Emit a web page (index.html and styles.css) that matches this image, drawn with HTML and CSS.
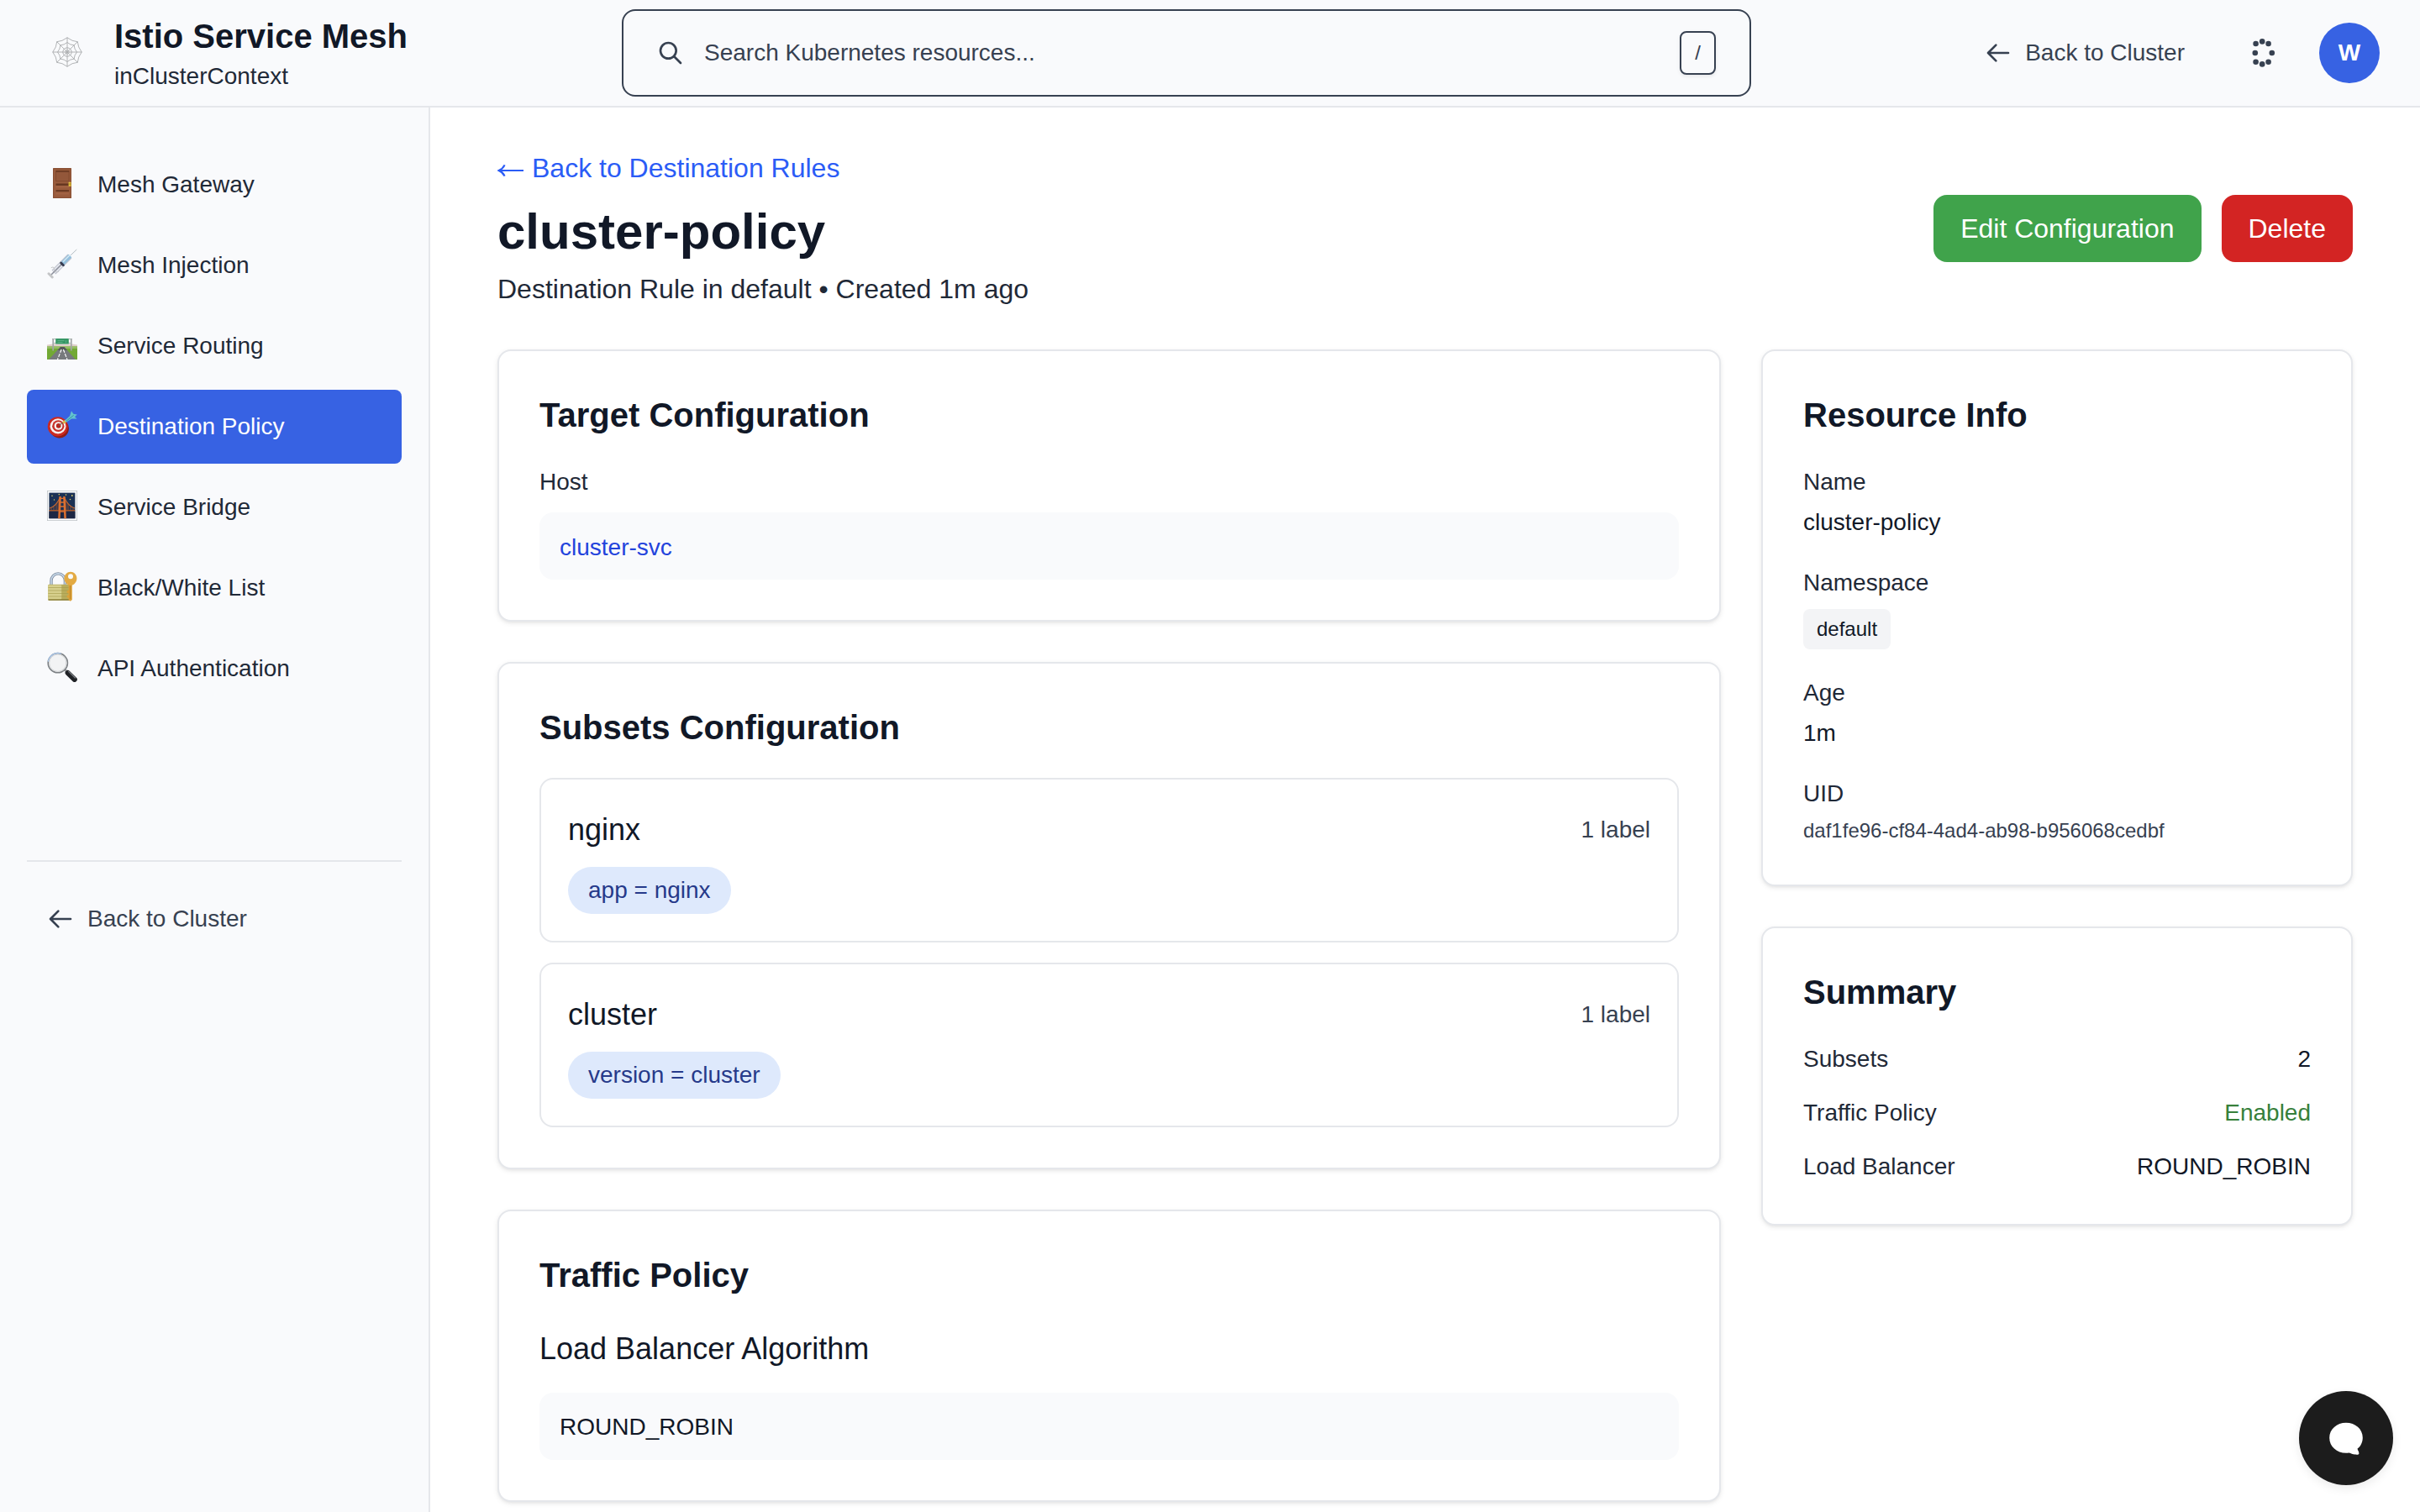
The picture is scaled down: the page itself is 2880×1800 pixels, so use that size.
FILE: index.html
```html
<!DOCTYPE html>
<html lang="en">
<head>
<meta charset="utf-8">
<title>cluster-policy - Istio Service Mesh</title>
<link rel="stylesheet" href="styles.css">
</head>
<body>
<header class="topbar">
  <div class="brand">
    <svg class="brand-icon" viewBox="0 0 36 36" fill="none" stroke="#a9abae" stroke-width="0.9">
      <path d="M18 0.5V35.5M0.5 18H35.5M5.6 5.6L30.4 30.4M30.4 5.6L5.6 30.4"/>
      <path d="M18 .8Q24 5.4 30.3 5.7Q30.6 12 35.2 18Q30.6 24 30.3 30.3Q24 30.6 18 35.2Q12 30.6 5.7 30.3Q5.4 24 .8 18Q5.4 12 5.7 5.7Q12 5.4 18 .8Z"/>
      <path d="M18 6.5Q21.6 9.6 26.1 9.9Q26.4 14.4 29.5 18Q26.4 21.6 26.1 26.1Q21.6 26.4 18 29.5Q14.4 26.4 9.9 26.1Q9.6 21.6 6.5 18Q9.6 14.4 9.9 9.9Q14.4 9.6 18 6.5Z"/>
      <circle cx="18" cy="18" r="5.2"/>
      <circle cx="18" cy="18" r="2.2"/>
    </svg>
    <div class="brand-text">
      <h1 class="brand-title">Istio Service Mesh</h1>
      <p class="brand-context">inClusterContext</p>
    </div>
  </div>
  <div class="search">
    <svg class="icon" viewBox="0 0 24 24"><path d="M21 21l-6-6m2-5a7 7 0 11-14 0 7 7 0 0114 0z"/></svg>
    <span class="search-text">Search Kubernetes resources...</span>
    <kbd class="search-key">/</kbd>
  </div>
  <div class="actions">
    <a class="header-link">
      <svg class="icon" viewBox="0 0 24 24"><path d="M10 19l-7-7m0 0l7-7m-7 7h18"/></svg>
      <span>Back to Cluster</span>
    </a>
    <svg class="dots" viewBox="0 0 40 40" fill="#374151">
      <circle cx="18.2" cy="6.4" r="3.3"/><circle cx="10.6" cy="9" r="3.3"/><circle cx="25.6" cy="9" r="3.3"/>
      <circle cx="9.8" cy="20" r="3.3"/><circle cx="29.8" cy="20" r="3.3"/>
      <circle cx="10.6" cy="30.8" r="3.3"/><circle cx="25.6" cy="30.8" r="3.3"/><circle cx="18.2" cy="33.4" r="3.3"/>
    </svg>
    <span class="avatar">W</span>
  </div>
</header>

<div class="shell">
  <aside class="sidebar">
    <nav class="nav">
      <a class="nav-item">
        <svg class="nav-icon" viewBox="0 0 36 36">
          <rect x="7" y="0" width="22" height="36" rx=".6" fill="#8a5034"/>
          <rect x="8.2" y="1.4" width="19.6" height="33.4" fill="#9a5c3d"/>
          <path d="M10.5 3.2h15.6v12.6H10.5z" fill="#93573a" stroke="#7c452b" stroke-width=".8"/>
          <path d="M10.5 3.4h15.6v1.4H10.5zM10.5 18.6h15.6v2.2H10.5zM10.5 26.2h15.6v1.8H10.5z" fill="#63351f"/>
          <path d="M10.5 22.4h15.6M10.5 30.8h15.6" stroke="#ac6c4b" stroke-width=".8"/>
          <rect x="25.6" y="16.8" width="3" height="5" fill="#e3c23c"/>
          <path d="M25.6 19h3.2" stroke="#8f7314" stroke-width=".7"/>
        </svg>
        <span>Mesh Gateway</span>
      </a>
      <a class="nav-item">
        <svg class="nav-icon" viewBox="0 0 36 36" fill="none" stroke-linecap="round">
          <path d="M28.5 7.5L35 1.3" stroke="#b3bcc2" stroke-width="1"/>
          <path d="M8 28L27 9" stroke="#b9bcc8" stroke-width="6.8" stroke-linecap="butt"/>
          <path d="M8.4 27.6L27 9" stroke="#e4e7ee" stroke-width="5.2" stroke-linecap="butt"/>
          <path d="M18 18L27.5 8.5" stroke="#93bfdc" stroke-width="5.2" stroke-linecap="butt"/>
          <path d="M19.5 15.2L27 7.7" stroke="#d4e9f4" stroke-width="1.4"/>
          <path d="M5 31L18 18" stroke="#8d909c" stroke-width="1.6"/>
          <path d="M16.6 17L19.4 19.8" stroke="#363b50" stroke-width="2.8"/>
          <path d="M5.2 22.5Q9 20.8 8.6 25T13.5 27.4" stroke="#c3c5c8" stroke-width="1"/>
          <path d="M2 29.8L6.2 34" stroke="#c4c5c7" stroke-width="3"/>
        </svg>
        <span>Mesh Injection</span>
      </a>
      <a class="nav-item">
        <svg class="nav-icon" viewBox="0 0 36 36">
          <path d="M0 18.5L7 17.5H30L36 18.5V22H0Z" fill="#dfcfca"/>
          <path d="M0 20.4H36V36H0Z" fill="#72a934"/>
          <path d="M0 20.4H36V23H0Z" fill="#94bd63"/>
          <path d="M16 21h4.5L34 36H2Z" fill="#777a7d"/>
          <path d="M16 21h4.5L24 25H12.5Z" fill="#55585b"/>
          <path d="M17.1 24L12.5 36M19.4 24L24 36" stroke="#fff" stroke-width="1.2" stroke-dasharray="4 1.5"/>
          <path d="M7.2 11V25.5M28.8 11V25.5" stroke="#a2a5a7" stroke-width="1.7"/>
          <path d="M6 11.6H30M7 16.4H29" stroke="#a9b2ae" stroke-width="1"/>
          <rect x="10.2" y="11" width="15.6" height="6.6" rx=".7" fill="#369765"/>
          <path d="M12.5 13.5h8M12.5 15.5h6M22.5 13.2v3" stroke="#72bd97" stroke-width=".6"/>
        </svg>
        <span>Service Routing</span>
      </a>
      <a class="nav-item nav-item-active">
        <svg class="nav-icon" viewBox="0 0 36 36">
          <ellipse cx="14.3" cy="21.6" rx="11.4" ry="12" transform="rotate(-35 14.3 21.6)" fill="#8f1d17"/>
          <ellipse cx="12.7" cy="19.8" rx="12" ry="11.6" fill="#cb2a22"/>
          <ellipse cx="13" cy="19.4" rx="9.4" ry="9.1" fill="#f6f1ef"/>
          <ellipse cx="13.3" cy="19.2" rx="7.1" ry="6.9" fill="#c8322a"/>
          <ellipse cx="13.5" cy="19" rx="4.9" ry="4.8" fill="#f6f1ef"/>
          <ellipse cx="13.7" cy="18.9" rx="2.8" ry="2.8" fill="#b9271f"/>
          <path d="M14 18.6L21 13.6" stroke="#6d6253" stroke-width="1.1"/>
          <path d="M19 15.6L22.4 12.8" stroke="#e0b94a" stroke-width="3"/>
          <path d="M21 12.8L27 7.2 29 1.2 31.4 4.8 35.8 5.6 33 8.3 35.6 10.4 29.2 10.6 22.8 14.8Z" fill="#63c2cf"/>
          <path d="M23 13.2L31.6 6.4" stroke="#2f8d9f" stroke-width=".9"/>
        </svg>
        <span>Destination Policy</span>
      </a>
      <a class="nav-item">
        <svg class="nav-icon" viewBox="0 0 36 36" fill="none">
          <rect x=".4" y=".4" width="35.2" height="35.2" fill="#fff" stroke="#bfc4c7" stroke-width=".8"/>
          <rect x="2.4" y="2.6" width="31" height="30.6" fill="#1b3154"/>
          <rect x="2.4" y="25" width="31" height="8.2" fill="#1d2744"/>
          <path d="M2.4 23.8H33.4" stroke="#b45d2b" stroke-width="1.4"/>
          <path d="M3 21Q11 19 15.8 7.5M33 21Q25 19 20.2 7.5" stroke="#c96a31" stroke-width="1.1"/>
          <path d="M5 20.5v3M8 18.8v5M11 15.8v8M13.2 12.4v11M31 20.5v3M28 18.8v5M25 15.8v8M22.8 12.4v11" stroke="#a5562b" stroke-width=".8"/>
          <path d="M15.6 7L14.4 33.2M20.4 7L21.6 33.2" stroke="#dc7030" stroke-width="2.5"/>
          <path d="M15.5 9.4h5M15.3 14h5.4M15 19h6M14.8 25h6.4" stroke="#dc7030" stroke-width="1.3"/>
          <g fill="#d9cd6b"><circle cx="6" cy="6.2" r=".8"/><circle cx="14.3" cy="4.6" r=".8"/><circle cx="22.5" cy="5" r=".8"/><circle cx="29.8" cy="6" r=".9"/><circle cx="27.5" cy="10.5" r=".8"/><circle cx="8.5" cy="11" r=".7"/></g>
        </svg>
        <span>Service Bridge</span>
      </a>
      <a class="nav-item">
        <svg class="nav-icon" viewBox="0 0 36 36" fill="none">
          <path d="M5 17V11.5A8.2 8.6 0 0 1 21.4 11.5V17" stroke="#7f8da0" stroke-width="3.4"/>
          <path d="M5 17V11.5A8.2 8.6 0 0 1 21.4 11.5V17" stroke="#c6d7e8" stroke-width="1.6"/>
          <rect x="1.2" y="15.8" width="27" height="19" rx="1.4" fill="#b9ad5c"/>
          <rect x="1.2" y="16.4" width="16" height="17.6" rx="1" fill="#d6cf8c"/>
          <path d="M1.4 19.5h26M1.4 23h26M1.4 26.5h26M1.4 30h26" stroke="#a3984a" stroke-width=".6"/>
          <path d="M1.6 34h26" stroke="#867a35" stroke-width="1.4"/>
          <path d="M25.6 15h4.2V34l-2 1.8L25.6 34v-2l-2-1v-2l2-.8v-1.6l-2-1v-2l2-.8Z" fill="#dba139"/>
          <path d="M28 .8C32 .8 35.4 4.2 35.4 8.6S32 17 28 17 20.4 13 20.4 8.6 24 .8 28 .8Z" fill="#e3aa43"/>
          <circle cx="28" cy="6.2" r="3" fill="#f9fafb"/>
          <path d="M27.6 17V33" stroke="#b67d22" stroke-width=".8"/>
        </svg>
        <span>Black/White List</span>
      </a>
      <a class="nav-item">
        <svg class="nav-icon" viewBox="0 0 36 36" fill="none" stroke-linecap="round">
          <path d="M20.5 20.5L24 24.2" stroke="#9b9da0" stroke-width="3"/>
          <path d="M24.6 25L32.8 33" stroke="#202226" stroke-width="6"/>
          <path d="M25.6 23.4L33.4 31" stroke="#777b80" stroke-width="1.2"/>
          <circle cx="12.8" cy="13.2" r="11.6" fill="#f2f3f4" stroke="#7c8084" stroke-width="1.6"/>
          <path d="M1.4 11A11.6 11.6 0 0 1 16 2" stroke="#a9c4e6" stroke-width="1.5"/>
          <circle cx="12.8" cy="13.2" r="10.2" stroke="#d2d4d6" stroke-width="1"/>
        </svg>
        <span>API Authentication</span>
      </a>
    </nav>
    <div class="sidebar-footer">
      <a class="footer-link">
        <svg class="icon" viewBox="0 0 24 24"><path d="M10 19l-7-7m0 0l7-7m-7 7h18"/></svg>
        <span>Back to Cluster</span>
      </a>
    </div>
  </aside>

  <main class="main">
    <div class="page-head">
      <div>
        <a class="back-link">
          <svg class="back-arrow" viewBox="0 0 32 16"><path d="M2.2 8H31" stroke-width="2"/><path d="M8.6 1.4Q6.4 6 1.6 8Q6.4 10 8.6 14.6" stroke-width="2.2"/></svg>
          <span>Back to Destination Rules</span>
        </a>
        <h2 class="page-title">cluster-policy</h2>
        <p class="page-sub">Destination Rule in default • Created 1m ago</p>
      </div>
      <div class="buttons">
        <button class="btn btn-edit">Edit Configuration</button>
        <button class="btn btn-delete">Delete</button>
      </div>
    </div>

    <div class="columns">
      <div class="stack">
        <section class="card">
          <h3 class="card-title">Target Configuration</h3>
          <div class="label">Host</div>
          <div class="code-box code-host">cluster-svc</div>
        </section>

        <section class="card">
          <h3 class="card-title">Subsets Configuration</h3>
          <div class="subsets">
            <div class="subset">
              <div class="subset-head"><h4 class="subset-name">nginx</h4><span class="subset-count">1 label</span></div>
              <span class="pill">app = nginx</span>
            </div>
            <div class="subset">
              <div class="subset-head"><h4 class="subset-name">cluster</h4><span class="subset-count">1 label</span></div>
              <span class="pill">version = cluster</span>
            </div>
          </div>
        </section>

        <section class="card">
          <h3 class="card-title">Traffic Policy</h3>
          <h4 class="subset-name">Load Balancer Algorithm</h4>
          <div class="code-box code-algo">ROUND_ROBIN</div>
        </section>
      </div>

      <div class="stack">
        <section class="card">
          <h3 class="card-title">Resource Info</h3>
          <dl class="info">
            <div><dt class="label">Name</dt><dd class="value">cluster-policy</dd></div>
            <div><dt class="label">Namespace</dt><dd class="ns"><span class="ns-tag">default</span></dd></div>
            <div><dt class="label">Age</dt><dd class="value">1m</dd></div>
            <div><dt class="label">UID</dt><dd class="uid">daf1fe96-cf84-4ad4-ab98-b956068cedbf</dd></div>
          </dl>
        </section>

        <section class="card">
          <h3 class="card-title">Summary</h3>
          <div class="summary">
            <div class="summary-row"><span>Subsets</span><span class="summary-value">2</span></div>
            <div class="summary-row"><span>Traffic Policy</span><span class="summary-value enabled">Enabled</span></div>
            <div class="summary-row"><span>Load Balancer</span><span class="summary-value">ROUND_ROBIN</span></div>
          </div>
        </section>
      </div>
    </div>
  </main>
</div>

<button class="chat" aria-label="Chat">
  <svg class="chat-icon" viewBox="0 0 40 40" fill="#fff">
    <path d="M20 1.7C31 1.7 39.8 9.2 39.8 19.4C39.8 25 37.4 29.6 33.6 32.6C33.6 34.6 35.6 36 35.4 38.4C35.3 39.8 33 39.8 30.6 39.5C28 39.2 25.6 38 23.6 37.4C22.4 37.6 21.2 37.7 20 37.7C9 37.7 .2 30 .2 19.7C.2 9.4 9 1.7 20 1.7Z"/>
  </svg>
</button>
</body>
</html>
```
FILE: styles.css
```css
* {
  box-sizing: border-box;
  margin: 0;
  padding: 0;
}

body {
  height: 1800px;
  overflow: hidden;
  background: #fff;
  color: #111827;
  font-family: "Liberation Sans", Arial, Helvetica, sans-serif;
  font-size: 32px;
  line-height: 48px;
}

.icon {
  width: 32px;
  height: 32px;
  flex: none;
  fill: none;
  stroke: currentColor;
  stroke-width: 2;
  stroke-linecap: round;
  stroke-linejoin: round;
}

/* Top bar */
.topbar {
  display: grid;
  grid-template-columns: 740px 1344px 1fr;
  align-items: center;
  height: 128px;
  background: #f9fafc;
  border-bottom: 2px solid #e5e7eb;
}

.brand {
  display: flex;
  align-items: center;
  gap: 38px;
  padding-left: 62px;
}

.brand-icon {
  width: 36px;
  height: 36px;
  margin-top: -3px;
}

.brand-title {
  font-size: 40px;
  line-height: 56px;
  font-weight: 700;
}

.brand-context {
  font-size: 28px;
  line-height: 40px;
  color: #1f2937;
}

.search {
  display: flex;
  align-items: center;
  gap: 24px;
  height: 104px;
  padding: 0 40px;
  border: 2px solid #374151;
  border-radius: 16px;
  color: #374151;
  font-size: 28px;
  line-height: 40px;
}

.search-text {
  flex: 1;
}

.search-key {
  padding: 8px 16px;
  border: 2px solid #374151;
  border-radius: 8px;
  background: #f9fafc;
  box-shadow: 0 2px 4px rgba(0, 0, 0, 0.08);
  font: 24px/32px "Liberation Sans", Arial, sans-serif;
}

.actions {
  display: flex;
  align-items: center;
  justify-content: flex-end;
  gap: 46px;
  padding-right: 48px;
  color: #374151;
}

.header-link {
  display: flex;
  align-items: center;
  gap: 16px;
  margin-right: 28px;
  font-size: 28px;
  line-height: 40px;
}

.dots {
  width: 40px;
  height: 40px;
}

.avatar {
  width: 72px;
  height: 72px;
  border-radius: 50%;
  background: #3762e3;
  color: #fff;
  font-size: 28px;
  font-weight: 700;
  line-height: 72px;
  text-align: center;
}

/* Shell */
.shell {
  display: grid;
  grid-template-columns: 512px 1fr;
  height: 1672px;
}

.sidebar {
  display: flex;
  flex-direction: column;
  padding: 48px 32px;
  background: #f9fafc;
  border-right: 2px solid #e5e7eb;
}

.nav {
  display: flex;
  flex-direction: column;
  gap: 8px;
}

.nav-item {
  display: flex;
  align-items: center;
  gap: 24px;
  height: 88px;
  padding: 0 24px;
  border-radius: 8px;
  color: #1f2937;
  font-size: 28px;
  line-height: 40px;
}

.nav-item-active {
  background: #3762e3;
  color: #fff;
}

.nav-icon {
  width: 36px;
  height: 36px;
  margin-bottom: 4px;
}

.sidebar-footer {
  margin-top: 184px;
  padding-top: 24px;
  border-top: 2px solid #e5e7eb;
}

.footer-link {
  display: flex;
  align-items: center;
  gap: 16px;
  height: 88px;
  padding: 0 24px;
  color: #374151;
  font-size: 28px;
  line-height: 40px;
}

/* Page */
.main {
  padding: 48px 80px;
}

.page-head {
  display: flex;
  align-items: center;
  justify-content: space-between;
  margin-bottom: 48px;
}

.back-link {
  display: flex;
  align-items: center;
  gap: 9px;
  margin-bottom: 16px;
  color: #2b5cf6;
}

.back-arrow {
  width: 32px;
  height: 16px;
  margin-top: 6px;
  fill: none;
  stroke: currentColor;
}

.page-title {
  margin-bottom: 8px;
  font-size: 60px;
  line-height: 72px;
}

.page-sub {
  color: #1f2937;
}

.buttons {
  display: flex;
  gap: 24px;
}

.btn {
  height: 80px;
  padding: 0 32px;
  border: 0;
  border-radius: 16px;
  color: #fff;
  font: 32px/48px "Liberation Sans", Arial, sans-serif;
}

.btn-edit {
  background: #40a34b;
}

.btn-delete {
  background: #d32423;
}

.columns {
  display: grid;
  grid-template-columns: 1456px 704px;
  gap: 48px;
  align-items: start;
}

.stack {
  display: flex;
  flex-direction: column;
  gap: 48px;
}

.card {
  padding: 48px;
  border: 2px solid #e5e7eb;
  border-radius: 16px;
  background: #fff;
  box-shadow: 0 2px 6px rgba(0, 0, 0, 0.08), 0 2px 4px -2px rgba(0, 0, 0, 0.08);
}

.card-title {
  margin-bottom: 32px;
  font-size: 40px;
  line-height: 56px;
}

.label {
  color: #1f2937;
  font-size: 28px;
  line-height: 40px;
}

.code-box {
  height: 80px;
  padding: 21px 24px 19px;
  border-radius: 16px;
  background: #f9fafc;
  font-size: 28px;
  line-height: 40px;
}

.code-host {
  margin-top: 16px;
  padding-top: 22px;
  padding-bottom: 18px;
  color: #2343dc;
}

.code-algo {
  margin-top: 24px;
}

.subsets {
  display: flex;
  flex-direction: column;
  gap: 24px;
}

.subset {
  padding: 32px;
  border: 2px solid #e5e7eb;
  border-radius: 16px;
}

.subset-head {
  display: flex;
  align-items: center;
  justify-content: space-between;
  margin-bottom: 16px;
}

.subset-name {
  font-size: 36px;
  font-weight: 400;
  line-height: 56px;
}

.subset-count {
  color: #374151;
  font-size: 28px;
  line-height: 40px;
}

.pill {
  display: block;
  width: fit-content;
  padding: 8px 24px;
  border-radius: 28px;
  background: #dee9fc;
  color: #263a8a;
  font-size: 28px;
  line-height: 40px;
}

.info {
  display: flex;
  flex-direction: column;
  gap: 32px;
}

.value {
  margin-top: 8px;
  font-size: 28px;
  line-height: 40px;
}

.ns {
  display: flex;
  height: 59px;
  padding-top: 11px;
}

.ns-tag {
  height: 48px;
  padding: 8px 16px;
  border-radius: 8px;
  background: #f3f4f6;
  font-size: 24px;
  line-height: 32px;
}

.uid {
  margin-top: 8px;
  color: #374151;
  font-size: 24px;
  line-height: 32px;
}

.summary {
  display: flex;
  flex-direction: column;
  gap: 24px;
}

.summary-row {
  display: flex;
  justify-content: space-between;
  color: #1f2937;
  font-size: 28px;
  line-height: 40px;
}

.summary-value {
  color: #111827;
}

.summary-value.enabled {
  color: #37803b;
}

/* Floating chat launcher */
.chat {
  position: fixed;
  right: 32px;
  bottom: 32px;
  display: flex;
  align-items: center;
  justify-content: center;
  width: 112px;
  height: 112px;
  border: 0;
  border-radius: 50%;
  background: #1c1c1c;
  box-shadow: 0 4px 12px rgba(0, 0, 0, 0.08);
}

.chat-icon {
  width: 40px;
  height: 40px;
}
```
